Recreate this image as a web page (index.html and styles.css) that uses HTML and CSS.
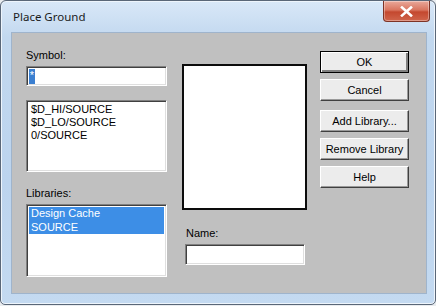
FILE: index.html
```html
<!DOCTYPE html>
<html>
<head>
    <title>Place Ground</title>
    <link rel="stylesheet" href="styles.css">
</head>
<body>
    <div class="window">
        <div class="titlebar">
            <span class="title">Place Ground</span>
            <button class="btn-close" title="Close">
                <svg width="13" height="11" viewBox="0 0 13 11">
                    <path d="M2 1.5 L11 9.5 M11 1.5 L2 9.5" stroke="#fff" stroke-width="2.6" stroke-linecap="square"/>
                </svg>
            </button>
        </div>
        <div class="client">
            <!-- Symbol + Libraries -->
            <div class="col-left">
                <label class="lbl">Symbol:</label>
                <div class="field symbol-input"><span class="sel">*</span></div>
                <div class="listbox symbol-list">
                    <div class="item">$D_HI/SOURCE</div>
                    <div class="item">$D_LO/SOURCE</div>
                    <div class="item">0/SOURCE</div>
                </div>
                <label class="lbl lbl-libs">Libraries:</label>
                <div class="listbox lib-list">
                    <div class="item selected">Design Cache</div>
                    <div class="item selected">SOURCE</div>
                </div>
            </div>
            <!-- Preview + Name -->
            <div class="col-mid">
                <div class="preview"></div>
                <label class="lbl lbl-name">Name:</label>
                <div class="field name-input"></div>
            </div>
            <!-- Buttons -->
            <div class="col-right">
                <button class="btn btn-default">OK</button>
                <button class="btn">Cancel</button>
                <button class="btn btn-sep">Add Library...</button>
                <button class="btn">Remove Library</button>
                <button class="btn">Help</button>
            </div>
        </div>
    </div>
</body>
</html>
```

FILE: styles.css
```css
body {
    margin: 0;
    background-color: #e9ecef;
    font-family: "Liberation Sans", Arial, sans-serif;
    font-size: 11px;
    color: #000;
}
.window {
    width: 418px;
    height: 303px;
    border: 1px solid #5a6778;
    border-radius: 6px 6px 5px 5px;
    background: linear-gradient(to bottom, #d9e8f8 0%, #c2d8ef 12%, #bcd4ee 60%, #c4daf1 100%);
    box-shadow: inset 0 0 0 1px #eef5fc;
    padding: 0 5px 0 11px;
}
.titlebar {
    height: 31px;
    display: flex;
    justify-content: space-between;
    align-items: flex-start;
}
.title {
    font-family: "Noto Sans", sans-serif;
    font-size: 11.5px;
    color: #1b1b1b;
    margin-top: 8px;
    margin-left: 1px;
}
.btn-close {
    width: 47px;
    height: 21px;
    padding: 0;
    border: 1px solid #7d3326;
    border-top: none;
    border-radius: 0 0 4px 4px;
    background: linear-gradient(to bottom, #e9a99b 0%, #d9755f 45%, #c4482f 55%, #d0654c 100%);
    box-shadow: inset 0 0 0 1px rgba(255,255,255,0.35);
    display: flex;
    align-items: center;
    justify-content: center;
}
.client {
    width: 416px;
    height: 262px;
    background-color: #c0c0c0;
    border: 1px solid #9fb4cc;
    margin-left: -1px;
    box-sizing: border-box;
    display: flex;
    padding-left: 14px;
}
.lbl {
    display: block;
    height: 13px;
    line-height: 13px;
}
.col-left {
    width: 141px;
    padding-top: 16px;
}
.field {
    background: #fff;
    border-top: 1px solid #808080;
    border-left: 1px solid #808080;
    border-right: 1px solid #fff;
    border-bottom: 1px solid #fff;
    box-shadow: inset 1px 1px 0 #404040, inset -1px -1px 0 #dfdfdf;
    box-sizing: border-box;
}
.symbol-input {
    width: 141px;
    height: 20px;
    margin-top: 4px;
    padding: 2px 0 0 2px;
}
.sel {
    display: inline-block;
    background: #3b7fd0;
    color: #fff;
    width: 6px;
    height: 15px;
    line-height: 13px;
    text-align: center;
}
.listbox {
    background: #fff;
    border-top: 1px solid #808080;
    border-left: 1px solid #808080;
    border-right: 1px solid #fff;
    border-bottom: 1px solid #fff;
    box-shadow: inset 1px 1px 0 #404040, inset -1px -1px 0 #dfdfdf;
    box-sizing: border-box;
    padding: 2px 2px;
}
.item {
    height: 13px;
    line-height: 13px;
    padding-left: 2px;
    white-space: nowrap;
}
.item.selected {
    background: #3d8ee6;
    color: #fff;
    height: 13.5px;
}
.symbol-list {
    height: 72px;
    margin-top: 14px;
    padding-top: 2px;
}
.lbl-libs {
    margin-top: 15px;
}
.lib-list {
    height: 73px;
    margin-top: 4px;
}
.col-mid {
    width: 125px;
    margin-left: 15px;
    padding-top: 31px;
}
.preview {
    height: 146px;
    background: #fff;
    border: 2px solid #0c0c0c;
    box-sizing: border-box;
}
.lbl-name {
    margin-top: 17px;
    margin-left: 4px;
}
.name-input {
    width: 120px;
    height: 21px;
    margin-top: 4px;
    margin-left: 3px;
}
.col-right {
    width: 89px;
    margin-left: 13px;
    padding-top: 18px;
    display: flex;
    flex-direction: column;
}
.btn {
    font-family: "Liberation Sans", Arial, sans-serif;
    font-size: 11px;
    width: 89px;
    height: 22px;
    padding: 0;
    margin-bottom: 6px;
    background: #ececec;
    border-top: 1px solid #fff;
    border-left: 1px solid #fff;
    border-right: 1px solid #404040;
    border-bottom: 1px solid #404040;
    box-shadow: inset -1px -1px 0 #9a9a9a;
    color: #000;
}
.btn-default {
    border: 1px solid #000;
    box-shadow: inset 1px 1px 0 #fff, inset -2px -2px 0 #808080;
}
.btn-sep {
    margin-top: 3px;
}
```
